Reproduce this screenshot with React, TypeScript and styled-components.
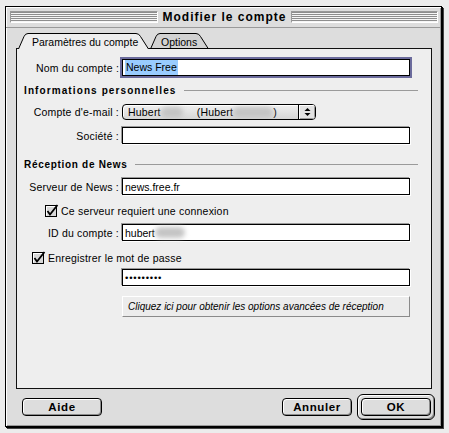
import React from "react";
import styled, { createGlobalStyle } from "styled-components";

const GlobalStyle = createGlobalStyle`
  html, body {
    margin: 0;
    padding: 0;
    background: #ececec;
  }
  body {
    font-family: "Liberation Sans", Arial, sans-serif;
    font-size: 10.5px;
    color: #000;
  }
`;

const Desktop = styled.div`
  width: 449px;
  height: 433px;
  padding: 6px 0 0 5px;
  box-sizing: border-box;
  background: #ececec;
`;

const Window = styled.div`
  width: 437px;
  height: 421px;
  box-sizing: border-box;
  border: 1px solid #000;
  box-shadow: 1px 1px 0 #000, 2px 2px 0 #444;
  background: #dddddd;
  display: flex;
  flex-direction: column;
`;

const TitleBar = styled.div`
  height: 20px;
  flex: none;
  display: flex;
  align-items: center;
  padding: 0 3px 0 4px;
  border-bottom: 1px solid #999;
  box-shadow: inset 1px 1px 0 #fff, inset -1px 0 0 #999;
`;

const Stripes = styled.div`
  flex: 1;
  height: 12px;
  box-sizing: border-box;
  border-top: 1px solid #999;
  border-left: 1px solid #999;
  border-right: 1px solid #fff;
  border-bottom: 1px solid #fff;
  background: repeating-linear-gradient(
    to bottom,
    #8e8e8e 0 1px,
    #f6f6f6 1px 2px
  );
`;

const Title = styled.div`
  padding: 0 4px 0 5px;
  font-weight: 700;
  font-size: 12px;
  letter-spacing: 1px;
  line-height: 14px;
`;

const Body = styled.div`
  flex: 1;
  display: flex;
  flex-direction: column;
  padding: 5px 9px 0 10px;
  box-shadow: inset 1px 0 0 #fff, inset -1px -1px 0 #999;
`;

const TabRow = styled.div`
  display: flex;
  height: 16px;
  margin-bottom: -1px;
  padding-left: 1px;
  position: relative;
  z-index: 1;
`;

const TabBox = styled.div<{ $w: number; $active?: boolean; $pad: number }>`
  position: relative;
  width: ${(p) => p.$w}px;
  height: 16px;
  margin-left: ${(p) => (p.$active ? 0 : -1)}px;
  z-index: ${(p) => (p.$active ? 2 : 1)};
  display: flex;
  align-items: center;
  padding-left: ${(p) => p.$pad}px;
  box-sizing: border-box;
  font-size: 10.5px;
  padding-top: 1px;
`;

const TabSvg = styled.svg`
  position: absolute;
  left: 0;
  top: 0;
`;

const TabText = styled.span`
  position: relative;
`;

const Panel = styled.div`
  height: 341px;
  box-sizing: border-box;
  border: 1px solid #111;
  background: #eeeeee;
  display: flex;
  flex-direction: column;
  padding: 0 13px 0 0;
  letter-spacing: 0.2px;
`;

const Row = styled.div<{ $top: number; $h: number; $indent?: number }>`
  display: flex;
  align-items: center;
  margin-top: ${(p) => p.$top}px;
  height: ${(p) => p.$h}px;
  padding-left: ${(p) => p.$indent ?? 0}px;
  flex: none;
`;

const Label = styled.div`
  width: 102px;
  text-align: right;
  margin-right: 3px;
  white-space: nowrap;
`;

const Field = styled.div<{ $focused?: boolean }>`
  width: 288px;
  height: 17px;
  box-sizing: border-box;
  border: 1px solid #000;
  background: #fff;
  display: flex;
  align-items: center;
  padding: 0 2px;
  white-space: nowrap;
  letter-spacing: 0;
  box-shadow: ${(p) =>
    p.$focused
      ? "0 0 0 2px #6b6b9c"
      : "-1px -1px 0 #9a9a9a, 1px 1px 0 #fff"};
`;

const Selected = styled.span`
  background: #99ccff;
  padding: 1px 1px 2px 1px;
`;

const Secret = styled.span`
  letter-spacing: 0.8px;
  font-size: 9.5px;
`;

const Blur = styled.span<{ $w: number }>`
  display: inline-block;
  width: ${(p) => p.$w}px;
  height: 11px;
  border-radius: 6px;
  background: #c4c4c4;
  filter: blur(2.5px);
  vertical-align: middle;
`;

const SectionHeader = styled.div<{ $top: number }>`
  display: flex;
  align-items: center;
  margin-top: ${(p) => p.$top}px;
  height: 14px;
  padding-left: 7px;
  flex: none;
`;

const SectionTitle = styled.span<{ $spacing: number }>`
  font-weight: 700;
  font-size: 10px;
  letter-spacing: ${(p) => p.$spacing}px;
  white-space: nowrap;
`;

const Rule = styled.div`
  flex: 1;
  height: 1px;
  margin-left: 7px;
  background: #9a9a9a;
`;

const Popup = styled.div`
  width: 194px;
  height: 16px;
  box-sizing: border-box;
  border: 1px solid #000;
  border-radius: 4px;
  background: linear-gradient(#f0f0f0, #d6d6d6);
  box-shadow: inset 1px 1px 0 #fff;
  display: flex;
  align-items: stretch;
  overflow: hidden;
`;

const PopupText = styled.div`
  flex: 1;
  display: flex;
  align-items: center;
  padding-left: 5px;
  white-space: nowrap;
`;

const PopupGap = styled.span<{ $w: number }>`
  display: inline-block;
  width: ${(p) => p.$w}px;
`;

const ArrowBox = styled.div`
  width: 16px;
  border-left: 1px solid #000;
  display: flex;
  align-items: center;
  justify-content: center;
  background: #e2e2e2;
  box-shadow: inset 1px 1px 0 #fff, inset -1px -1px 0 #999;
`;

const CheckLabel = styled.span`
  margin-left: 2px;
  white-space: nowrap;
`;

const AdvancedButton = styled.div`
  margin-left: 105px;
  width: 288px;
  height: 21px;
  box-sizing: border-box;
  background: #ececec;
  border-top: 1px solid #fff;
  border-left: 1px solid #fff;
  border-right: 1px solid #8a8a8a;
  border-bottom: 1px solid #8a8a8a;
  display: flex;
  align-items: center;
  padding-left: 5px;
  font-style: italic;
  font-size: 10px;
  letter-spacing: 0;
  white-space: nowrap;
`;

const ButtonRow = styled.div`
  display: flex;
  align-items: center;
  height: 26px;
  margin-top: 5px;
  padding-left: 6px;
  margin-right: -3px;
`;

const PushButton = styled.div<{ $w: number; $push?: boolean }>`
  width: ${(p) => p.$w}px;
  height: 18px;
  box-sizing: border-box;
  border: 1px solid #000;
  border-radius: 4px;
  background: #dddddd;
  box-shadow: inset 1px 1px 0 #fff, inset -1px -1px 0 #8c8c8c;
  display: flex;
  align-items: center;
  justify-content: center;
  font-weight: 700;
  font-size: 11.5px;
  letter-spacing: 0.6px;
  margin-left: ${(p) => (p.$push ? "auto" : "0")};
`;

const DefaultRing = styled.div`
  margin-left: 5px;
  padding: 3px;
  border: 1px solid #000;
  border-radius: 6px;
  background: #dddddd;
  box-shadow: inset 1px 1px 0 #fff, inset -1px -1px 0 #8c8c8c;
`;

const Tab = ({ w, label, active, pad }: { w: number; label: string; active?: boolean; pad: number }) => (
  <TabBox $w={w} $active={active} $pad={pad}>
    <TabSvg width={w} height={16} viewBox={`0 0 ${w} 16`}>
      <path
        d={`M1.5 16 L7 3.5 Q8.3 0.5 11 0.5 L${w - 14} 0.5 Q${w - 11} 0.5 ${w - 9.5} 3.5 L${w - 1.5} 16`}
        fill={active ? "#eeeeee" : "#d2d2d2"}
        stroke="#000"
      />
      {!active && <line x1={0} y1={15.5} x2={w} y2={15.5} stroke="#000" />}
    </TabSvg>
    <TabText>{label}</TabText>
  </TabBox>
);

const Checkbox = () => (
  <svg width={14} height={13} viewBox="0 0 14 13">
    <rect x={0.5} y={1.5} width={11} height={11} fill="#d8d8d8" stroke="#000" />
    <path d="M1.5 11.5 V2.5 H10.5" stroke="#fff" fill="none" />
    <path d="M2.5 7 L5 10.5 L12.5 1" stroke="#000" strokeWidth={1.8} fill="none" />
  </svg>
);

const Arrows = () => (
  <svg width={7} height={10} viewBox="0 0 7 10">
    <path d="M0.5 4 L3.5 1 L6.5 4 Z" fill="#000" />
    <path d="M0.5 6 L3.5 9 L6.5 6 Z" fill="#000" />
  </svg>
);

export default function App() {
  return (
    <Desktop>
      <GlobalStyle />
      <Window>
        <TitleBar>
          <Stripes />
          <Title>Modifier le compte</Title>
          <Stripes />
        </TitleBar>
        <Body>
          <TabRow>
            <Tab w={133} label="Paramètres du compte" active pad={15} />
            <Tab w={61} label="Options" pad={12} />
          </TabRow>
          <Panel>
            <Row $top={10} $h={17}>
              <Label>Nom du compte :</Label>
              <Field $focused>
                <Selected>News Free</Selected>
              </Field>
            </Row>

            <SectionHeader $top={7}>
              <SectionTitle $spacing={1.1}>Informations personnelles</SectionTitle>
              <Rule />
            </SectionHeader>

            <Row $top={7} $h={16}>
              <Label>Compte d'e-mail :</Label>
              <Popup>
                <PopupText>
                  Hubert
                  <Blur $w={22} />
                  <PopupGap $w={14} />
                  (Hubert
                  <Blur $w={40} />
                  )
                </PopupText>
                <ArrowBox>
                  <Arrows />
                </ArrowBox>
              </Popup>
            </Row>

            <Row $top={7} $h={17}>
              <Label>Société :</Label>
              <Field />
            </Row>

            <SectionHeader $top={13}>
              <SectionTitle $spacing={0.7}>Réception de News</SectionTitle>
              <Rule />
            </SectionHeader>

            <Row $top={7} $h={17}>
              <Label>Serveur de News :</Label>
              <Field>news.free.fr</Field>
            </Row>

            <Row $top={9} $h={13} $indent={28}>
              <Checkbox />
              <CheckLabel>Ce serveur requiert une connexion</CheckLabel>
            </Row>

            <Row $top={7} $h={17}>
              <Label>ID du compte :</Label>
              <Field>
                hubert
                <Blur $w={30} />
              </Field>
            </Row>

            <Row $top={10} $h={13} $indent={15}>
              <Checkbox />
              <CheckLabel>Enregistrer le mot de passe</CheckLabel>
            </Row>

            <Row $top={5} $h={17} $indent={105}>
              <Field>
                <Secret>•••••••••</Secret>
              </Field>
            </Row>

            <Row $top={10} $h={21}>
              <AdvancedButton>
                Cliquez ici pour obtenir les options avancées de réception
              </AdvancedButton>
            </Row>
          </Panel>
          <ButtonRow>
            <PushButton $w={80}>Aide</PushButton>
            <PushButton $w={70} $push>
              Annuler
            </PushButton>
            <DefaultRing>
              <PushButton $w={70}>OK</PushButton>
            </DefaultRing>
          </ButtonRow>
        </Body>
      </Window>
    </Desktop>
  );
}
